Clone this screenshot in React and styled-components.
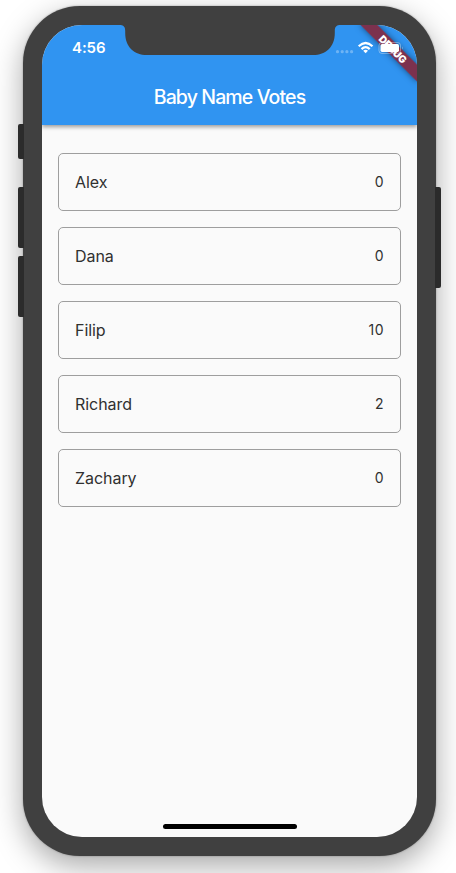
import React from "react";
import styled, { createGlobalStyle } from "styled-components";

const GlobalStyle = createGlobalStyle`
  *, *::before, *::after { box-sizing: border-box; }
  html, body { margin: 0; background: #fff; overflow: hidden; }
  body { font-family: Inter, "Liberation Sans", sans-serif; }
`;

const Stage = styled.main`
  width: 456px;
  height: 873px;
  padding: 6px 0 0 23px;
  overflow: hidden;
`;

const Phone = styled.div`
  position: relative;
  width: 413px;
  height: 850px;
  padding: 19px;
  border-radius: 57px;
  background: #404040;
  box-shadow: 0 10px 30px rgba(0, 0, 0, 0.34), 0 0 2px rgba(0, 0, 0, 0.35);
`;

const SideButton = styled.span`
  position: absolute;
  top: ${(p) => p.$top}px;
  ${(p) => p.$side}: -5px;
  width: 6px;
  height: ${(p) => p.$height}px;
  background: #2b2b2b;
  border-radius: ${(p) => (p.$side === "left" ? "2px 0 0 2px" : "0 2px 2px 0")};
`;

const Screen = styled.div`
  position: relative;
  display: flex;
  flex-direction: column;
  width: 375px;
  height: 812px;
  overflow: hidden;
  border-radius: 40px;
  background: #fafafa;
`;

const AppBar = styled.header`
  flex: none;
  height: 100px;
  background: #3094f1;
  color: #fff;
  box-shadow: 0 2px 4px rgba(0, 0, 0, 0.38);
`;

const StatusBar = styled.div`
  display: flex;
  height: 44px;
  padding: 0 10px 0 30px;
`;

const Time = styled.span`
  padding-top: 14px;
  font-size: 15px;
  line-height: 18px;
  font-weight: 600;
  letter-spacing: -0.1px;
`;

const StatusIcons = styled.svg`
  position: absolute;
  top: 14px;
  right: 8px;
`;

const Notch = styled.svg`
  position: absolute;
  top: 0;
  left: 77px;
`;

const Title = styled.h1`
  margin: 0;
  height: 56px;
  line-height: 56px;
  text-align: center;
  font-size: 19.5px;
  font-weight: 500;
  letter-spacing: -0.88px;
`;

const Ribbon = styled.div`
  position: absolute;
  top: 18px;
  left: 311px;
  width: 80px;
  height: 12px;
  transform: rotate(45deg);
  background: rgba(148, 18, 26, 0.76);
  box-shadow: 0 0 6px rgba(0, 0, 0, 0.5);
  color: #fff;
  text-align: center;
  font-size: 10.2px;
  line-height: 12px;
  font-weight: 900;
  letter-spacing: -0.2px;
`;

const List = styled.ul`
  display: flex;
  flex-direction: column;
  gap: 16px;
  margin: 0;
  padding: 28px 16px;
  list-style: none;
`;

const Row = styled.li`
  display: flex;
  align-items: center;
  justify-content: space-between;
  height: 58px;
  padding: 0 16px;
  border: 1px solid #9e9e9e;
  border-radius: 5px;
  color: #303030;
`;

const Name = styled.span`
  font-size: 16px;
  line-height: 20px;
  letter-spacing: -0.05px;
`;

const Count = styled.span`
  font-size: 14px;
  line-height: 20px;
  letter-spacing: 0.5px;
`;

const HomeIndicator = styled.div`
  width: 134px;
  height: 5px;
  margin: auto auto 8px;
  border-radius: 3px;
  background: #000;
`;

const sideButtons = [
  { side: "left", top: 118, height: 35 },
  { side: "left", top: 181, height: 61 },
  { side: "left", top: 250, height: 61 },
  { side: "right", top: 181, height: 101 },
];

const names = [
  { name: "Alex", votes: 0 },
  { name: "Dana", votes: 0 },
  { name: "Filip", votes: 10 },
  { name: "Richard", votes: 2 },
  { name: "Zachary", votes: 0 },
];

function StatusGlyphs() {
  return (
    <StatusIcons width="75" height="18" viewBox="0 0 75 18" aria-hidden="true">
      <g fill="#fff" fillOpacity="0.3">
        <circle cx="3.5" cy="12.7" r="1.6" />
        <circle cx="8.2" cy="12.7" r="1.6" />
        <circle cx="12.9" cy="12.7" r="1.6" />
        <circle cx="17.6" cy="12.7" r="1.6" />
      </g>
      <g fill="none" stroke="#fff" strokeWidth="2.2">
        <path d="M24.7 7.2Q31.6 0.8 38.5 7.2" />
        <path d="M27.5 10.1Q31.6 6.2 35.7 10.1" />
      </g>
      <path d="M29.2 11.7Q31.6 9.7 34 11.7L31.6 14.2Z" fill="#fff" />
      <rect x="45" y="3.6" width="21.5" height="10.8" rx="2.8" fill="none" stroke="#fff" strokeOpacity="0.38" />
      <path d="M68 7.2Q69.7 9 68 10.8Z" fill="#fff" fillOpacity="0.4" />
      <rect x="46.5" y="5.1" width="18.5" height="7.8" rx="1.6" fill="#fff" />
    </StatusIcons>
  );
}

export default function App() {
  return (
    <>
      <GlobalStyle />
      <Stage>
        <Phone>
          {sideButtons.map((b) => (
            <SideButton key={b.side + b.top} $side={b.side} $top={b.top} $height={b.height} />
          ))}
          <Screen>
            <AppBar>
              <StatusBar>
                <Time>4:56</Time>
              </StatusBar>
              <Title>Baby Name Votes</Title>
            </AppBar>
            <List>
              {names.map((n) => (
                <Row key={n.name}>
                  <Name>{n.name}</Name>
                  <Count>{n.votes}</Count>
                </Row>
              ))}
            </List>
            <HomeIndicator />
            <Ribbon>DEBUG</Ribbon>
            <StatusGlyphs />
            <Notch width="222" height="31" viewBox="0 0 222 31" aria-hidden="true">
              <path
                d="M0 0C4.8 0 6.2 1.8 6.2 6V8C6.2 22 15 30 28 30H194C207 30 215.8 22 215.8 8V6C215.8 1.8 217.2 0 222 0Z"
                fill="#404040"
              />
            </Notch>
          </Screen>
        </Phone>
      </Stage>
    </>
  );
}
